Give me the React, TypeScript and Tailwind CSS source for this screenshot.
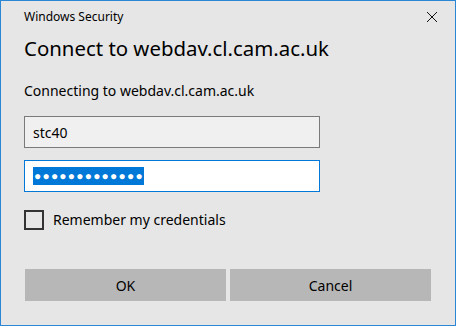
import React from 'react';

function App() {
    return (
        <div className="w-[456px] h-[326px] border border-[#2b87d6] bg-[#e6e6e6] flex flex-col text-black" style={{ fontFamily: '"Noto Sans", "Open Sans", sans-serif' }}>
            <div className="flex items-center justify-between pl-[23px] pr-[16px] h-[32px]">
                <span className="text-[12px] leading-[16px]">Windows Security</span>
                <svg width="12" height="12" viewBox="0 0 12 12" className="mr-[1px]">
                    <path d="M1 1 L11 11 M11 1 L1 11" stroke="#111" strokeWidth="1" fill="none" />
                </svg>
            </div>
            <div className="px-[23px] flex flex-col">
                <h1 className="text-[20.4px] leading-[28px] mt-[1px]">Connect to webdav.cl.cam.ac.uk</h1>
                <p className="text-[14px] leading-[20px] mt-[19px]">Connecting to webdav.cl.cam.ac.uk</p>
                <div className="mt-[15px] w-[296px] h-[32px] border border-[#7a7a7a] bg-[#f0f0f0] flex items-center px-[8px] text-[14px]">
                    stc40
                </div>
                <div className="mt-[12px] w-[296px] h-[32px] border border-[#0078d7] bg-white flex items-center px-[8px]">
                    <span className="bg-[#0078d7] text-white h-[18px] flex items-center text-[12px] tracking-[1.2px] leading-none pl-[1px]">●●●●●●●●●●●●●</span>
                </div>
                <div className="mt-[18px] flex items-center gap-[9px]">
                    <div className="w-[20px] h-[20px] border-2 border-[#333333]" />
                    <span className="text-[14px] leading-[20px]">Remember my credentials</span>
                </div>
            </div>
            <div className="mt-auto mb-[24px] px-[24px] flex gap-[4px]">
                <button className="flex-1 h-[32px] bg-[#b7b7b7] text-[14px]">OK</button>
                <button className="flex-1 h-[32px] bg-[#b7b7b7] text-[14px]">Cancel</button>
            </div>
        </div>
    );
}

export default App;
